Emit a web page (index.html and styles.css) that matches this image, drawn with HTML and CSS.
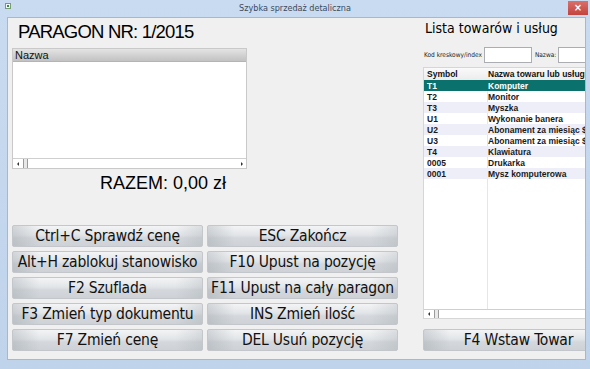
FILE: index.html
```html
<!DOCTYPE html>
<html lang="pl">
<head>
  <meta charset="UTF-8">
  <title>Szybka sprzedaż detaliczna</title>
  <link rel="stylesheet" href="styles.css">
</head>
<body>
<div class="window">
  <div class="titlebar">
    <svg class="appicon" width="6" height="6" viewBox="0 0 6 6">
      <rect x="0.5" y="0.5" width="5" height="5" fill="#f4f8f4" stroke="#7a9a7a" stroke-width="1"/>
      <rect x="2" y="2" width="2" height="2" fill="#2f8f3f"/>
    </svg>
    <div class="title">Szybka sprzedaż detaliczna</div>
    <div class="close">×</div>
  </div>
  <div class="client">
    <div class="left">
      <div class="receipt-no">PARAGON NR: 1/2015</div>
      <div class="listbox">
        <div class="lb-head">Nazwa</div>
        <div class="lb-body"></div>
        <div class="hscroll">
          <div class="arrow"><span class="tri-left"></span></div>
          <div class="thumb"></div>
          <div class="track"></div>
          <div class="arrow"><span class="tri-right"></span></div>
        </div>
      </div>
      <div class="total">RAZEM: 0,00 zł</div>
      <div class="keys">
        <button class="key">Ctrl+C Sprawdź cenę</button>
        <button class="key">ESC Zakończ</button>
        <button class="key">Alt+H zablokuj stanowisko</button>
        <button class="key">F10 Upust na pozycję</button>
        <button class="key">F2 Szuflada</button>
        <button class="key">F11 Upust na cały paragon</button>
        <button class="key">F3 Zmień typ dokumentu</button>
        <button class="key">INS Zmień ilość</button>
        <button class="key">F7 Zmień cenę</button>
        <button class="key">DEL Usuń pozycję</button>
      </div>
    </div>

    <div class="right">
      <div class="r-title">Lista towarów i usług</div>
      <div class="filter">
        <span class="f-label">Kod kreskowy/index</span>
        <input class="f-input f-code" type="text">
        <span class="f-label">Nazwa:</span>
        <input class="f-input f-name" type="text">
      </div>
      <div class="grid">
        <div class="g-head">
          <span class="c-sym">Symbol</span>
          <span class="c-name">Nazwa towaru lub usługi</span>
        </div>
        <div class="g-body">
          <div class="g-row selected"><span class="c-sym">T1</span><span class="c-name">Komputer</span></div>
          <div class="g-row"><span class="c-sym">T2</span><span class="c-name">Monitor</span></div>
          <div class="g-row"><span class="c-sym">T3</span><span class="c-name">Myszka</span></div>
          <div class="g-row"><span class="c-sym">U1</span><span class="c-name">Wykonanie banera</span></div>
          <div class="g-row"><span class="c-sym">U2</span><span class="c-name">Abonament za miesiąc $</span></div>
          <div class="g-row"><span class="c-sym">U3</span><span class="c-name">Abonament za miesiąc $</span></div>
          <div class="g-row"><span class="c-sym">T4</span><span class="c-name">Klawiatura</span></div>
          <div class="g-row"><span class="c-sym">0005</span><span class="c-name">Drukarka</span></div>
          <div class="g-row"><span class="c-sym">0001</span><span class="c-name">Mysz komputerowa</span></div>
          <div class="g-fill"></div>
        </div>
        <div class="hscroll">
          <div class="arrow"><span class="tri-left"></span></div>
          <div class="thumb"></div>
          <div class="track"></div>
        </div>
      </div>
      <button class="key wide">F4 Wstaw Towar</button>
    </div>
  </div>
</div>
</body>
</html>
```

FILE: styles.css
```css
html, body {
  margin: 0;
  padding: 0;
}

body {
  width: 590px;
  height: 369px;
  overflow: hidden;
  font-family: "Liberation Sans", Arial, sans-serif;
}

.window {
  width: 590px;
  height: 369px;
  display: flex;
  flex-direction: column;
  background: linear-gradient(to bottom, #c9dbf0, #bfd3eb);
}

.titlebar {
  position: relative;
  height: 17px;
  flex: none;
}

.titlebar .appicon {
  position: absolute;
  left: 5px;
  top: 3px;
}

.titlebar .title {
  text-align: center;
  font-family: "DejaVu Sans Condensed", "DejaVu Sans", sans-serif;
  font-size: 9px;
  line-height: 17px;
  color: #3c4a5c;
}

.titlebar .close {
  position: absolute;
  right: 2px;
  top: 1px;
  width: 20px;
  height: 14px;
  background: linear-gradient(to bottom, #d9706c, #c4433e);
  color: #fff;
  font-family: "DejaVu Sans", sans-serif;
  font-size: 10px;
  line-height: 13px;
  text-align: center;
  font-weight: bold;
}

.client {
  flex: 1;
  margin: 0 4px 9px 7px;
  border: 1px solid #a5b8d0;
  background: #f0f0f0;
  display: flex;
  padding-left: 4px;
  overflow: hidden;
}

/* lewa strona */
.left {
  width: 386px;
  flex: none;
  display: flex;
  flex-direction: column;
}

.receipt-no {
  margin-top: 2px;
  padding-left: 6px;
  font-size: 18.5px;
  line-height: 24px;
  letter-spacing: -0.8px;
  color: #000;
}

.listbox {
  margin-top: 4px;
  width: 233px;
  height: 119px;
  border: 1px solid #c9c9c9;
  background: #fff;
  display: flex;
  flex-direction: column;
}

.lb-head {
  height: 12px;
  line-height: 12px;
  padding-left: 2px;
  font-size: 11px;
  color: #111;
  background: linear-gradient(to bottom, #e4e4e4, #cfcfcf 60%, #c2c2c2);
  border-bottom: 1px solid #b4b4b4;
}

.lb-body {
  flex: 1;
}

.hscroll {
  height: 9px;
  border-top: 1px solid #cfcfcf;
  display: flex;
  background: #fff;
}

.hscroll .arrow {
  width: 9px;
  display: flex;
  align-items: center;
  justify-content: center;
}

.tri-left {
  width: 0;
  height: 0;
  border-top: 2px solid transparent;
  border-bottom: 2px solid transparent;
  border-right: 2px solid #333;
}

.tri-right {
  width: 0;
  height: 0;
  border-top: 2px solid transparent;
  border-bottom: 2px solid transparent;
  border-left: 2px solid #333;
}

.hscroll .thumb {
  width: 3px;
  margin-left: 1px;
  border-left: 1px solid #9a9a9a;
  border-right: 1px solid #9a9a9a;
  background: #e8e8e8;
}

.hscroll .track {
  flex: 1;
}

.total {
  margin-top: 3px;
  padding-left: 88px;
  font-size: 18px;
  line-height: 22px;
  color: #000;
}

.keys {
  margin-top: 31px;
  display: grid;
  grid-template-columns: 191px 191px;
  grid-auto-rows: 22px;
  gap: 4px;
}

.key {
  box-sizing: border-box;
  height: 22px;
  margin: 0;
  padding: 0;
  border: 1px solid #c3c6ca;
  border-radius: 2px;
  background:
    linear-gradient(to right, rgba(150, 158, 166, 0.35), rgba(150, 158, 166, 0) 14%, rgba(150, 158, 166, 0) 86%, rgba(150, 158, 166, 0.25)),
    linear-gradient(to bottom, #f3f4f5, #e2e5e8 45%, #d4d8dc 60%, #ced2d6);
  font-family: "DejaVu Sans Condensed", "DejaVu Sans", sans-serif;
  font-size: 15.5px;
  line-height: 20px;
  letter-spacing: -0.2px;
  color: #111;
  white-space: nowrap;
  overflow: hidden;
}

/* prawa strona */
.right {
  margin-left: 25px;
  width: 163px;
  flex: none;
  display: flex;
  flex-direction: column;
  overflow: hidden;
}

.r-title {
  margin-top: 2px;
  padding-left: 2px;
  font-family: "DejaVu Sans Condensed", "DejaVu Sans", sans-serif;
  font-size: 14px;
  line-height: 17px;
  color: #000;
  white-space: nowrap;
}

.filter {
  margin-top: 10px;
  display: flex;
  align-items: center;
  height: 16px;
  white-space: nowrap;
}

.f-label {
  font-family: "DejaVu Sans Condensed", "DejaVu Sans", sans-serif;
  font-size: 6.5px;
  color: #222;
  padding-left: 1px;
}

.f-input {
  box-sizing: border-box;
  height: 16px;
  margin: 0;
  padding: 0;
  border: 1px solid #abadb3;
  background: #fff;
  flex: none;
}

.f-code {
  width: 48px;
  margin-left: 2px;
  margin-right: 2px;
}

.f-name {
  width: 60px;
  margin-left: 2px;
}

.grid {
  margin-top: 4px;
  width: 200px;
  height: 252px;
  box-sizing: border-box;
  border: 1px solid #d6d6d6;
  background: #fff;
  display: flex;
  flex-direction: column;
}

.g-head {
  height: 12px;
  display: flex;
  align-items: center;
  font-size: 8.5px;
  font-weight: bold;
  color: #111;
  background: linear-gradient(to bottom, #fafafa, #ececec);
  white-space: nowrap;
}

.c-sym {
  width: 60px;
  padding-left: 3px;
  flex: none;
}

.c-name {
  padding-left: 1px;
  white-space: nowrap;
}

.g-body {
  flex: 1;
  display: flex;
  flex-direction: column;
  background: linear-gradient(to right, transparent 63px, #e6e6e6 63px, #e6e6e6 64px, transparent 64px);
}

.g-row {
  height: 11px;
  display: flex;
  align-items: center;
  font-size: 8.5px;
  font-weight: bold;
  color: #1a1a1a;
  white-space: nowrap;
}

.g-row:nth-child(odd) {
  background-color: #eeeef9;
}

.g-row.selected {
  background-color: #0b716c;
  color: #fff;
}

.g-fill {
  flex: 1;
}

.grid .hscroll {
  height: 8px;
}

.key.wide {
  margin-top: 10px;
  width: 191px;
  flex: none;
}
```
